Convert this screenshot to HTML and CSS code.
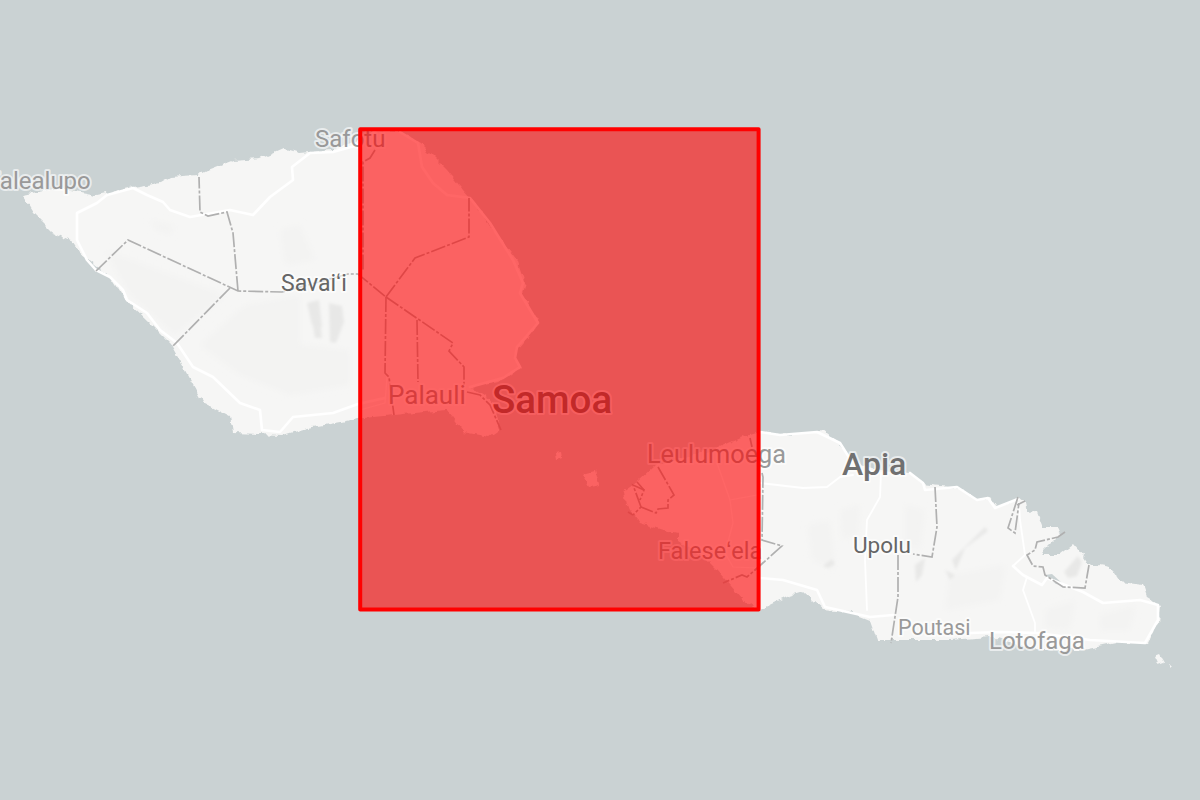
FILE: index.html
```html
<!DOCTYPE html>
<html lang="en">
<head>
<meta charset="utf-8">
<title>Samoa map</title>
<link rel="stylesheet" href="styles.css">
</head>
<body>
<main class="map">
<svg class="map-svg" viewBox="0 0 1200 800" width="1200" height="800">
  <defs>
    <filter id="rough" x="-5%" y="-5%" width="110%" height="110%">
      <feTurbulence type="fractalNoise" baseFrequency="0.12" numOctaves="2" seed="4" result="noise"/>
      <feDisplacementMap in="SourceGraphic" in2="noise" scale="7" xChannelSelector="R" yChannelSelector="G"/>
    </filter>
    <filter id="soft" x="-5%" y="-5%" width="110%" height="110%">
      <feGaussianBlur stdDeviation="3"/>
    </filter>
    <filter id="softer" x="-5%" y="-5%" width="110%" height="110%">
      <feGaussianBlur stdDeviation="1.4"/>
    </filter>
    <filter id="line" x="-5%" y="-5%" width="110%" height="110%">
      <feGaussianBlur stdDeviation="0.35"/>
    </filter>
  </defs>
  <g class="land" filter="url(#rough)">
    <path d="M22 195L60 188L97 195L133 187L160 183L170 177L197 175L207 170L233 160L260 158L283 148L300 153L333 150L358 140L375 131L400 132L420 143L447 170L463 190L478 207L493 230L507 247L517 260L525 283L522 293L540 323L517 350L515 358L520 367L503 380L470 387L490 400L500 430L490 437L463 432L447 410L393 415L363 418L330 424L307 428L283 435L233 433L230 417L203 403L192 383L170 343L147 320L123 297L110 277L80 253L73 242L53 233L33 213Z"/>
    <path d="M760 432L790 435L813 432L823 430L840 443L852 462L880 470L910 473L923 483L957 487L977 500L990 498L997 508L1018 497L1025 503L1027 513L1037 512L1043 528L1057 528L1060 535L1040 555L1060 555L1073 545L1083 557L1087 563L1110 567L1120 582L1143 585L1147 597L1160 605L1158 623L1148 643L1117 643L1083 650L1040 650L990 637L950 640L877 640L870 620L850 612L823 610L803 592L787 597L760 610L757 610L743 600L717 570L707 560L678 542L678 533L663 530L640 523L625 503L623 492L637 482L655 465L713 450L740 438Z"/>
    <path d="M555 452L561 451L562 458L556 460Z"/>
    <path d="M583 473L595 470L599 484L590 486Z"/>
    <path d="M1155 657L1160 655L1164 662L1158 664Z"/>
    <path d="M1167 666L1171 667L1169 669Z"/>
  </g>
  <g class="shade-light" filter="url(#soft)">
    <path d="M105 250L225 295L175 335L130 295Z"/>
    <path d="M245 305L300 295L300 345L350 350L350 385L290 395L240 375L200 345Z"/>
    <path d="M150 220L175 225L170 235L155 230Z"/>
    <path d="M280 230L300 225L315 260L285 265Z"/>
    <path d="M808 525L830 520L835 570L812 560Z"/>
    <path d="M840 510L860 505L858 535L842 540Z"/>
    <path d="M905 505L925 510L920 550L905 545Z"/>
    <path d="M950 575L1005 565L1000 600L945 610Z"/>
    <path d="M1045 610L1075 600L1070 630L1045 628Z"/>
    <path d="M1100 615L1135 605L1130 630L1100 630Z"/>
  </g>
  <g class="shade-mid" filter="url(#softer)">
    <path d="M307 303L319 300L322 327L312 325Z"/>
    <path d="M312 320L320 320L322 338L315 338Z"/>
    <path d="M329 303L342 306L344 322L336 343L330 342Z"/>
    <path d="M952 560L985 527L988 531L965 548L956 570Z"/>
    <path d="M915 565L925 558L922 575L916 582Z"/>
    <path d="M1064 572L1078 556L1082 562L1077 576L1068 578Z"/>
    <path d="M823 566L832 559L835 564L828 568Z"/>
    <path d="M945 570L955 575L950 580Z"/>
  </g>
  <path class="inlet" d="M1045 575L1052 574L1064 585L1056 584Z"/>
  <g class="roads" filter="url(#line)">
    <path d="M96 270L110 277L123 290L127 300L147 313L160 330L177 343L193 367L213 377L240 403L260 410L262 430L280 432L293 417L333 413L358 404L385 398"/>
    <path d="M96 270L87 260L77 240L77 213L97 203L107 195L133 188L147 195L163 202L170 210L190 217L230 210L253 215L270 197L293 180L292 167L310 153L333 152L358 145L375 131"/>
    <path d="M400 132L418 143L422 167L433 183L447 195L470 198L490 223L513 260L523 283L520 293L538 323L517 347L515 358L520 367L503 378L470 387"/>
    <path d="M760 432L780 435L817 432L840 443L852 462"/>
    <path class="road-mid" d="M760 483L803 488L827 487L840 477L853 475"/>
    <path d="M760 578L783 580L817 590L825 607L870 617L893 615"/>
    <path class="road-mid" d="M881 473L880 497L867 520L865 560L867 610"/>
    <path d="M910 473L923 483L925 490L957 487L977 500L988 498L995 508L1018 499"/>
    <path class="road-mid" d="M1013 566L1025 555L1020 520L1019 503"/>
    <path d="M1013 566L1023 575L1042 585L1047 578L1083 592L1103 603L1140 600L1158 605L1158 620L1145 643L1090 640L1037 633L1000 632L970 633"/>
    <path class="road-mid" d="M1027 577L1023 590L1035 623L1035 633"/>
    <path class="road-thin" d="M717 463L730 500L733 523L725 553L733 567L757 568"/>
    <path class="road-thin" d="M730 500L757 495"/>
    <path class="road-thin" d="M360 410L385 403L387 377"/>
  </g>
  <g class="borders">
    <path d="M96 271L128 240L238 291L282 292L348 274L358 274L386 297"/>
    <path d="M230 288L172 347"/>
    <path d="M238 291L233 233L227 212L208 216L200 212L199 177"/>
    <path d="M375 150L370 158L363 162L363 270"/>
    <path d="M386 297L415 258L469 237L469 198"/>
    <path d="M386 297L453 343L449 351L464 367L464 387"/>
    <path d="M417 320L418 382"/>
    <path d="M386 297L385 373L389 377L394 415"/>
    <path d="M467 392L480 395L490 405L501 430"/>
    <path d="M658 467L674 495L668 500L668 508L658 509L656 513L641 507L633 515"/>
    <path d="M641 507L633 485L644 490L640 500"/>
    <path d="M637 482L644 490"/>
    <path d="M628 512L633 515"/>
    <path d="M750 438L752 447"/>
    <path d="M762 473L763 477L762 540L782 546L755 570L747 577L742 575L723 583"/>
    <path d="M935 487L937 527L932 557L913 554"/>
    <path d="M898 555L898 597L891 643"/>
    <path d="M1018 497L1008 528L1015 533L1019 503"/>
    <path d="M1025 501L1017 505"/>
    <path d="M1065 532L1058 537L1037 542L1035 550L1027 555L1033 566L1043 567L1045 575L1063 587L1085 588L1089 565"/>
  </g>
  <g class="labels">
    <text class="label town t24" x="-13" y="189">Falealupo</text>
    <text class="label town t24" x="315" y="147">Safotu</text>
    <text class="label region" x="281" y="291">Savaiʻi</text>
    <text class="label town t26" x="388" y="404">Palauli</text>
    <text class="label country" x="492" y="413">Samoa</text>
    <text class="label town t25" x="647" y="463">Leulumoega</text>
    <text class="label capital" x="842" y="475">Apia</text>
    <text class="label region upolu" x="853" y="553">Upolu</text>
    <text class="label town t23" x="658" y="559">Faleseʻela</text>
    <text class="label town t21" x="898" y="635">Poutasi</text>
    <text class="label town t24" x="989" y="649">Lotofaga</text>
  </g>
  <rect class="selection" x="360.2" y="129.2" width="398.4" height="480.4"/>
</svg>
</main>
</body>
</html>
```
FILE: styles.css
```css
html, body {
  margin: 0;
  padding: 0;
  background: #cad2d3;
}
.map {
  width: 1200px;
  height: 800px;
  overflow: hidden;
  background: #cad2d3;
}
.map-svg {
  display: block;
}
.land path {
  fill: #f6f6f5;
}
.shade-light path {
  fill: #f3f3f2;
}
.shade-mid path {
  fill: #e8e8e7;
}
.inlet {
  fill: #cad2d3;
}
.roads path {
  fill: none;
  stroke: #fff;
  stroke-width: 2.6;
  stroke-linejoin: round;
  stroke-linecap: round;
}
.roads .road-mid {
  stroke-width: 1.8;
}
.roads .road-thin {
  stroke-width: 1.2;
}
.borders path {
  fill: none;
  stroke: #b0b0b0;
  stroke-width: 1.7;
  stroke-dasharray: 15 2 3 2;
}
.label {
  font-family: Roboto, "Liberation Sans", sans-serif;
  paint-order: stroke;
  stroke: rgba(255, 255, 255, 0.6);
  stroke-width: 4px;
  stroke-linejoin: round;
}
.town {
  fill: #999;
}
.t21 {
  font-size: 21.5px;
}
.t23 {
  font-size: 23.5px;
}
.t24 {
  font-size: 24px;
}
.t25 {
  font-size: 25.3px;
}
.t26 {
  font-size: 26px;
}
.region {
  font-size: 23px;
  fill: #666;
}
.upolu {
  font-size: 22.5px;
}
.capital {
  font-size: 32px;
  font-weight: 500;
  fill: #707070;
}
.country {
  font-size: 38.5px;
  font-weight: 500;
  fill: #666;
}
.selection {
  fill: rgba(255, 0, 0, 0.6);
  stroke: #f00;
  stroke-width: 4;
  stroke-linejoin: round;
}
```
